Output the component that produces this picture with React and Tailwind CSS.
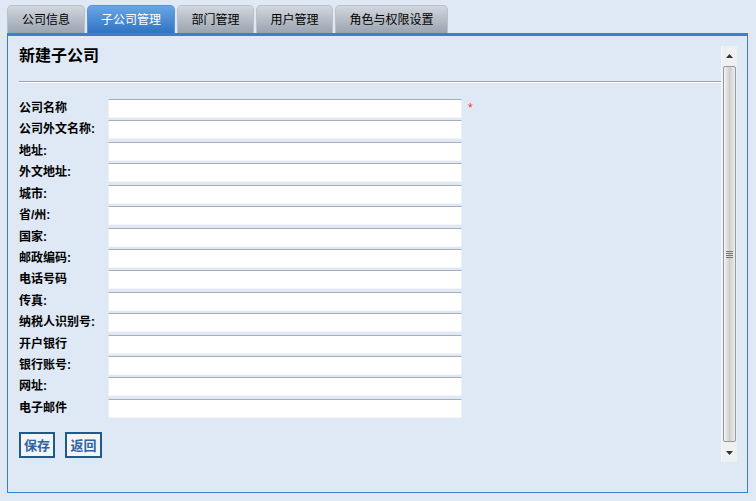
import React from 'react';

const TABS = ['公司信息', '子公司管理', '部门管理', '用户管理', '角色与权限设置'];
const TAB_WIDTHS = ['w-[78px]', 'w-[88px]', 'w-[77px]', 'w-[77px]', 'w-[113px]'];

const FIELDS = [
  { label: '公司名称', required: true },
  { label: '公司外文名称:' },
  { label: '地址:' },
  { label: '外文地址:' },
  { label: '城市:' },
  { label: '省/州:' },
  { label: '国家:' },
  { label: '邮政编码:' },
  { label: '电话号码' },
  { label: '传真:' },
  { label: '纳税人识别号:' },
  { label: '开户银行' },
  { label: '银行账号:' },
  { label: '网址:' },
  { label: '电子邮件' },
];

const font = { fontFamily: '"Liberation Sans", "Noto Sans CJK SC", sans-serif' };

const Scrollbar = () => (
  <div className="w-[16px] h-[416px] flex flex-col bg-[#e9eff6] border-l border-[#f4f7fb]">
    <div className="h-[19px] bg-[#eef0f2] flex items-center justify-center">
      <svg width="7" height="4" viewBox="0 0 7 4"><polygon points="3.5,0 7,4 0,4" fill="#333" /></svg>
    </div>
    <div className="flex-1 mx-[1px] my-[1px] rounded-[2px] border border-[#9a9a9a] bg-gradient-to-r from-[#f4f4f4] via-[#cfcfcf] to-[#ececec] flex items-center justify-center">
      <div className="flex flex-col gap-[1px]">
        <div className="w-[7px] h-[1px] bg-[#777]" />
        <div className="w-[7px] h-[1px] bg-[#777]" />
        <div className="w-[7px] h-[1px] bg-[#777]" />
        <div className="w-[7px] h-[1px] bg-[#777]" />
      </div>
    </div>
    <div className="h-[19px] bg-[#eef0f2] flex items-center justify-center">
      <svg width="7" height="4" viewBox="0 0 7 4"><polygon points="0,0 7,0 3.5,4" fill="#333" /></svg>
    </div>
  </div>
);

const App = () => {
  return (
    <div className="w-[756px] h-[501px] bg-[#dfe9f5] pt-[5px] pl-[7px] pr-[8px]" style={font}>
      <div className="flex gap-[2px] h-[28px]">
        {TABS.map((t, i) => (
          <div
            key={t}
            className={`${TAB_WIDTHS[i]} h-full rounded-t-[5px] flex items-center justify-center text-[12px] border border-b-0
              ${i === 1
                ? 'bg-gradient-to-b from-[#6aa6e6] to-[#2f73c2] text-white border-[#5b94d4]'
                : 'bg-gradient-to-b from-[#d3d7de] to-[#9aa3b0] text-black border-[#b9c0ca]'}`}
          >
            {t}
          </div>
        ))}
      </div>
      <div className="h-[460px] border border-t-[3px] border-[#3b80c8] pt-[10px] pl-[2px] pr-[10px]">
        <div className="flex">
          <div className="flex-1 pl-[9px] pt-[1px]">
            <h2 className="text-[16px] font-bold text-black leading-[18px] h-[18px]">新建子公司</h2>
            <div className="mt-[16px] h-[1px] bg-[#a0a4a8] border-b border-white box-content" />
            <div className="mt-[16px] flex flex-col">
              {FIELDS.map((f) => (
                <div key={f.label} className="flex items-start h-[21.43px]">
                  <div className="w-[89px] text-[12px] font-bold text-black leading-[19px]">{f.label}</div>
                  <div className="w-[354px] h-[19px] bg-white border-t border-t-[#a9aeb5] border-x border-x-[#eef0f2] border-b border-b-[#f4f5f7]" />
                  {f.required && <span className="ml-[6px] text-[#ff3333] text-[12px] leading-[19px]">*</span>}
                </div>
              ))}
            </div>
            <div className="mt-[12px] flex gap-[10px]">
              <button className="w-[36px] h-[26px] border-2 border-[#1f5a8c] bg-[#f3f4f5] text-[#2d63a3] text-[13px] font-bold leading-none">保存</button>
              <button className="w-[37px] h-[26px] border-2 border-[#1f5a8c] bg-[#f3f4f5] text-[#2d63a3] text-[13px] font-bold leading-none">返回</button>
            </div>
          </div>
          <Scrollbar />
        </div>
      </div>
    </div>
  );
};

export default App;
